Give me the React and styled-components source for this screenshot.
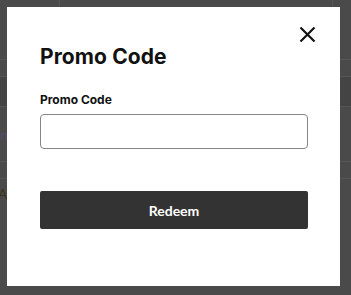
import React from 'react';
import styled, { createGlobalStyle } from 'styled-components';

const GlobalStyle = createGlobalStyle`
  html, body {
    margin: 0;
    padding: 0;
    width: 100%;
    height: 100%;
    background: #4a4a4a;
    overflow: hidden;
  }
  * {
    box-sizing: border-box;
  }
`;

// dimmed page that sits behind the dialog
const Backdrop = styled.div`
  position: fixed;
  inset: 0;
  display: flex;
  flex-direction: column;
  background: #4a4a4a;
  overflow: hidden;
`;

const TopBar = styled.div`
  height: 60px;
  display: grid;
  grid-template-columns: 60px 1fr 18px;
  border-bottom: 1px solid #555;
`;

const TopCell = styled.div`
  border-right: 1px solid ${(props) => (props.divider ? '#575757' : 'transparent')};
`;

const BgRow = styled.div`
  height: ${(props) => props.h}px;
  flex-shrink: 0;
  display: flex;
  align-items: center;
  background: ${(props) => props.bg || 'transparent'};
  border-bottom: 1px solid ${(props) => (props.line ? '#555' : 'transparent')};
  overflow: hidden;
`;

const BgText = styled.span`
  font-family: 'Lato', 'Liberation Sans', sans-serif;
  font-size: 14px;
  color: ${(props) => props.color};
  margin-left: ${(props) => props.shift}px;
  white-space: nowrap;
`;

const Overlay = styled.div`
  position: fixed;
  inset: 0;
  padding: 7px 11px 9px 7px;
  display: flex;
`;

const Modal = styled.div`
  position: relative;
  flex: 1;
  background: #fff;
  padding: 37px 32px 0 33px;
  display: flex;
  flex-direction: column;
`;

const CloseButton = styled.button`
  position: absolute;
  top: 19px;
  right: 24px;
  width: 17px;
  height: 17px;
  padding: 0;
  border: none;
  background: none;
  cursor: pointer;
  display: flex;
  align-items: center;
  justify-content: center;
`;

const Title = styled.h2`
  margin: 0;
  font-family: 'Inter', 'Liberation Sans', sans-serif;
  font-weight: 700;
  font-size: 21px;
  line-height: 25px;
  color: #111;
  letter-spacing: 0.1px;
`;

const Label = styled.label`
  margin-top: 23px;
  font-family: 'Inter', 'Liberation Sans', sans-serif;
  font-weight: 700;
  font-size: 12px;
  line-height: 15px;
  color: #111;
`;

const Input = styled.input`
  margin-top: 7px;
  height: 35px;
  width: 100%;
  border: 1px solid #858585;
  border-radius: 4px;
  padding: 0 10px;
  font-family: 'Inter', 'Liberation Sans', sans-serif;
  font-size: 14px;
  outline: none;
`;

const RedeemButton = styled.button`
  margin-top: 42px;
  height: 38px;
  width: 100%;
  border: none;
  border-radius: 2px;
  background: #333;
  color: #fff;
  font-family: 'Lato', 'Liberation Sans', sans-serif;
  font-weight: 700;
  font-size: 14px;
  cursor: pointer;
`;

const CloseIcon = () => (
  <svg width="17" height="17" viewBox="0 0 17 17">
    <path d="M1.5 1.5 L15.5 15.5 M15.5 1.5 L1.5 15.5" stroke="#111" strokeWidth="2.2" fill="none" />
  </svg>
);

const App = () => (
  <>
    <GlobalStyle />
    <Backdrop>
      <TopBar>
        <TopCell divider />
        <TopCell divider />
        <TopCell />
      </TopBar>
      <BgRow h={17} line />
      <BgRow h={30} bg="#444" line />
      <BgRow h={55} line>
        <BgText color="#5b4a70" shift={0}>n</BgText>
      </BgRow>
      <BgRow h={17} line />
      <BgRow h={30}>
        <BgText color="#3a3221" shift={-2}>AT</BgText>
      </BgRow>
    </Backdrop>
    <Overlay>
      <Modal>
        <CloseButton aria-label="Close">
          <CloseIcon />
        </CloseButton>
        <Title>Promo Code</Title>
        <Label htmlFor="promo">Promo Code</Label>
        <Input id="promo" type="text" />
        <RedeemButton>Redeem</RedeemButton>
      </Modal>
    </Overlay>
  </>
);

export default App;
